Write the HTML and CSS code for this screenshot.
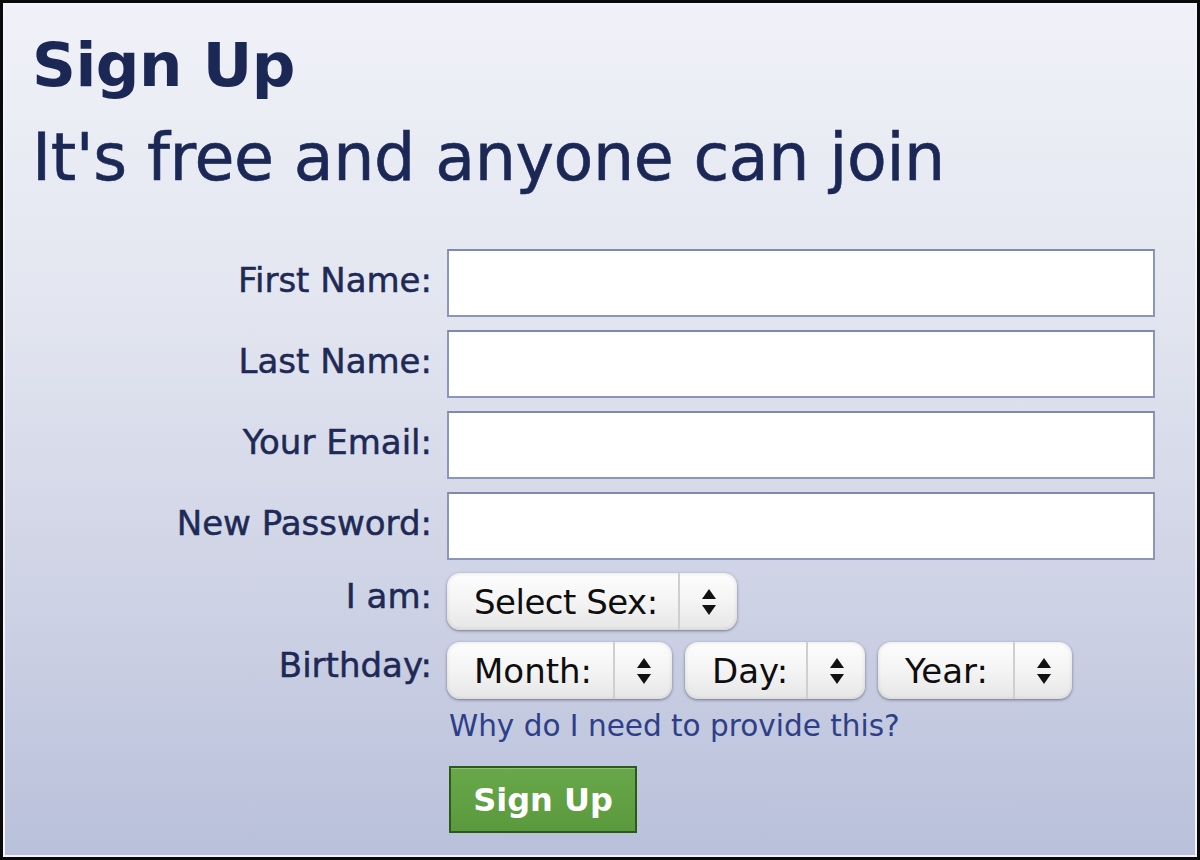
FILE: index.html
```html
<!DOCTYPE html>
<html>
<head>
<meta charset="utf-8">
<link rel="stylesheet" href="styles.css">
</head>
<body>
<div class="frame">
  <div class="panel">
    <h1 class="title">Sign Up</h1>
    <h2 class="subtitle">It's free and anyone can join</h2>
    <div class="form">
      <label class="lbl">First Name:</label>
      <div class="field"><div class="input"></div></div>
      <label class="lbl">Last Name:</label>
      <div class="field"><div class="input"></div></div>
      <label class="lbl">Your Email:</label>
      <div class="field"><div class="input"></div></div>
      <label class="lbl">New Password:</label>
      <div class="field"><div class="input"></div></div>
      <label class="lbl lbl-sel">I am:</label>
      <div class="field">
        <div class="select sel-sex"><span class="sel-text">Select Sex:</span><span class="sel-arrows"><svg width="16" height="30" viewBox="0 0 16 30"><path d="M8 2 L15 12 L1 12 Z" fill="#111"/><path d="M8 28 L15 18 L1 18 Z" fill="#111"/></svg></span></div>
      </div>
      <label class="lbl lbl-sel">Birthday:</label>
      <div class="field bday">
        <div class="select sel-month"><span class="sel-text">Month:</span><span class="sel-arrows"><svg width="16" height="30" viewBox="0 0 16 30"><path d="M8 2 L15 12 L1 12 Z" fill="#111"/><path d="M8 28 L15 18 L1 18 Z" fill="#111"/></svg></span></div>
        <div class="select sel-day"><span class="sel-text">Day:</span><span class="sel-arrows"><svg width="16" height="30" viewBox="0 0 16 30"><path d="M8 2 L15 12 L1 12 Z" fill="#111"/><path d="M8 28 L15 18 L1 18 Z" fill="#111"/></svg></span></div>
        <div class="select sel-year"><span class="sel-text">Year:</span><span class="sel-arrows"><svg width="16" height="30" viewBox="0 0 16 30"><path d="M8 2 L15 12 L1 12 Z" fill="#111"/><path d="M8 28 L15 18 L1 18 Z" fill="#111"/></svg></span></div>
      </div>
      <div class="spacer"></div>
      <div class="field extra">
        <a class="why" href="#">Why do I need to provide this?</a>
        <button class="btn">Sign Up</button>
      </div>
    </div>
  </div>
</div>
</body>
</html>
```

FILE: styles.css
```css
html, body {
  margin: 0;
  padding: 0;
  width: 1200px;
  height: 860px;
  overflow: hidden;
  background: #000;
}
.frame {
  box-sizing: border-box;
  width: 1200px;
  height: 860px;
  border: 3px solid #0a0a0a;
}
.panel {
  box-sizing: border-box;
  height: 100%;
  border: 2px solid #f4f5fa;
  background: linear-gradient(to bottom, #f0f1f8 0%, #e3e6f0 35%, #cacfe3 75%, #b9c0da 100%);
  padding: 24px 0 0 27px;
  font-family: "DejaVu Sans", "Liberation Sans", sans-serif;
  color: #1b2856;
}
.title {
  margin: 0;
  font-size: 61px;
  line-height: 72px;
  font-weight: bold;
  letter-spacing: -0.5px;
}
.subtitle {
  margin: 11px 0 0 0;
  font-size: 65px;
  line-height: 92px;
  font-weight: normal;
  letter-spacing: -0.4px;
  -webkit-text-stroke: 0.6px #1b2856;
}
.form {
  display: grid;
  grid-template-columns: 400px 708px;
  column-gap: 15px;
  row-gap: 13px;
  margin-top: 45px;
  align-items: center;
}
.lbl {
  text-align: right;
  font-size: 34px;
  line-height: 40px;
  color: #1e2a55;
  margin-top: -6px;
  -webkit-text-stroke: 0.5px #1e2a55;
}
.lbl-sel {
  margin-top: -12px;
}
.input {
  box-sizing: border-box;
  height: 68px;
  background: #fff;
  border: 2px solid #8c96bb;
  border-top-color: #7e89b0;
}
.field.bday {
  display: flex;
  gap: 13px;
  margin-top: -1px;
}
.select {
  box-sizing: border-box;
  display: flex;
  align-items: center;
  height: 57px;
  border-radius: 13px;
  background: linear-gradient(to bottom, #fdfdfd 0%, #f4f4f4 50%, #e6e6e6 100%);
  box-shadow: 0 1px 3px rgba(40, 45, 70, 0.55), inset 0 0 4px rgba(0,0,0,0.12);
  color: #0e0e0e;
  font-size: 34px;
}
.sel-text {
  flex: 1;
  padding-left: 27px;
  white-space: nowrap;
}
.sel-arrows {
  display: flex;
  align-items: center;
  justify-content: center;
  width: 57px;
  height: 100%;
  border-left: 2px solid #cfcfcf;
}
.sel-sex { width: 290px; }
.sel-sex .sel-text { letter-spacing: -0.5px; }
.sel-month { width: 225px; }
.sel-day { width: 180px; }
.sel-year { width: 194px; }
.extra {
  display: flex;
  flex-direction: column;
  align-items: flex-start;
  margin-top: -6px;
}
.why {
  color: #2e3f8a;
  text-decoration: none;
  font-size: 29.5px;
  line-height: 40px;
  margin-left: 2px;
}
.btn {
  margin-top: 20px;
  margin-left: 2px;
  box-sizing: border-box;
  width: 188px;
  height: 67px;
  border: 2px solid #2b5b1b;
  background: linear-gradient(to bottom, #68a84a 0%, #5a9a3d 100%);
  box-shadow: inset 0 1px 0 #8cc46f;
  color: #fff;
  font-family: "DejaVu Sans", "Liberation Sans", sans-serif;
  font-weight: bold;
  font-size: 32px;
  padding: 0;
}
```
